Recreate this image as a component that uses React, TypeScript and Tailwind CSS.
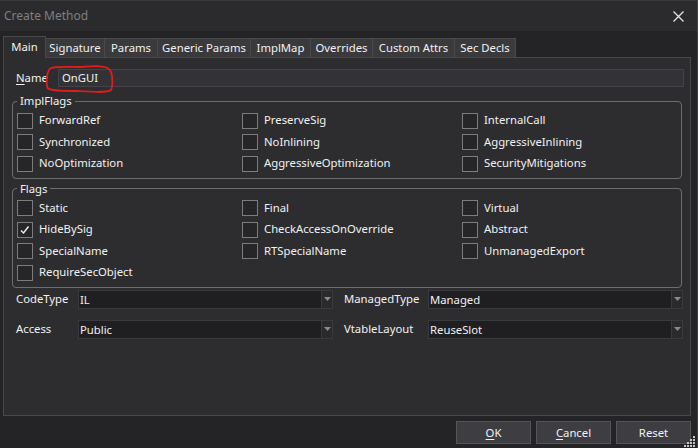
import React from "react";

const implFlags: [string, boolean][] = [
  ["ForwardRef", false],
  ["PreserveSig", false],
  ["InternalCall", false],
  ["Synchronized", false],
  ["NoInlining", false],
  ["AggressiveInlining", false],
  ["NoOptimization", false],
  ["AggressiveOptimization", false],
  ["SecurityMitigations", false],
];

const flags: [string, boolean][] = [
  ["Static", false],
  ["Final", false],
  ["Virtual", false],
  ["HideBySig", true],
  ["CheckAccessOnOverride", false],
  ["Abstract", false],
  ["SpecialName", false],
  ["RTSpecialName", false],
  ["UnmanagedExport", false],
  ["RequireSecObject", false],
];

const tabs = [
  { label: "Signature", w: "w-[59px]" },
  { label: "Params", w: "w-[53px]" },
  { label: "Generic Params", w: "w-[93px]" },
  { label: "ImplMap", w: "w-[60px]" },
  { label: "Overrides", w: "w-[62px]" },
  { label: "Custom Attrs", w: "w-[82px]" },
  { label: "Sec Decls", w: "w-[61px]" },
];

function CheckBox({ label, checked }: { label: string; checked: boolean }) {
  return (
    <div className="flex items-center h-[21.5px]">
      <span className="w-[16px] h-[16px] shrink-0 border border-[#7c7c7c] bg-[#262628] flex items-center justify-center">
        {checked && (
          <svg width="14" height="14" viewBox="0 0 14 14">
            <path d="M3 7.5 L5.5 10 L10.5 3.5" fill="none" stroke="#f0f0f0" strokeWidth="1.4" />
          </svg>
        )}
      </span>
      <span className="ml-[6px] whitespace-nowrap">{label}</span>
    </div>
  );
}

function Group({ title, items, className }: { title: string; items: [string, boolean][]; className: string }) {
  return (
    <fieldset className={`ml-[8px] mr-[8px] border border-[#6e6e6e] rounded-[4px] ${className}`}>
      <legend className="ml-[4px] px-[3px] leading-[14px]">{title}</legend>
      <div className="grid grid-cols-[225px_220px_1fr] pl-[4px]">
        {items.map(([label, checked]) => (
          <CheckBox key={label} label={label} checked={checked} />
        ))}
      </div>
    </fieldset>
  );
}

function Select({ value }: { value: string }) {
  return (
    <div className="w-[255px] h-[19px] flex border border-[#3a3a3e] bg-[#1f1f21]">
      <span className="flex-1 pl-[1px] leading-[17px]">{value}</span>
      <span className="w-[11px] border-l border-[#3a3a3e] bg-[#2a2a2d] flex items-center justify-center">
        <svg width="7" height="4" viewBox="0 0 7 4">
          <path d="M0 0 H7 L3.5 4 Z" fill="#8a8a8a" />
        </svg>
      </span>
    </div>
  );
}

function Button({ children }: { children: React.ReactNode }) {
  return (
    <button className="w-[75px] h-[23px] bg-[#3e3e42] border border-[#555558] text-[#f1f1f1] leading-[20px]">
      {children}
    </button>
  );
}

export default function App() {
  return (
    <div className="relative w-[698px] h-[448px] bg-[#242426] text-[#f1f1f1] text-[11.3px] font-['Noto_Sans','Open_Sans',sans-serif] overflow-hidden border-r border-[#434345]">
      {/* Title bar */}
      <div className="h-[31px] bg-[#2b2b2d] border-t border-[#3a3a3c] flex items-center justify-between pl-[4px] pr-[13px]">
        <span className="text-[#7f7f7f] text-[12px]">Create Method</span>
        <svg width="11" height="11" viewBox="0 0 11 11">
          <path d="M0.5 0.5 L10.5 10.5 M10.5 0.5 L0.5 10.5" stroke="#e6e6e6" strokeWidth="1.3" />
        </svg>
      </div>

      {/* Tabs */}
      <div className="relative z-10 flex items-end h-[22px] mt-[5px] ml-[3px] -mb-[1px]">
        <div className="w-[43px] h-[22px] bg-[#2d2d30] border-l border-t border-r border-[#48484b] flex items-center justify-center pb-[1px]">
          Main
        </div>
        {tabs.map((t) => (
          <div
            key={t.label}
            className={`${t.w} h-[19px] mb-[1px] bg-[#3a3a3d] border-t border-r border-[#4a4a4d] flex items-center justify-center whitespace-nowrap`}
          >
            {t.label}
          </div>
        ))}
      </div>

      {/* Tab page */}
      <div className="ml-[3px] w-[688px] h-[359px] bg-[#2d2d30] border border-[#48484b]">
        <div className="flex items-center mt-[11px] pl-[12px] pr-[6px]">
          <span className="w-[42px]">
            <span className="underline underline-offset-2">N</span>ame
          </span>
          <div className="flex-1 h-[18px] bg-[#333337] border border-[#444448] pl-[3px] leading-[16px]">OnGUI</div>
        </div>

        <Group title="ImplFlags" items={implFlags} className="mt-[7px] pt-[2px] pb-[3px]" />
        <Group title="Flags" items={flags} className="mt-[3px] pt-[2px] pb-[3px]" />

        <div className="grid grid-cols-[62px_255px_95px_255px] gap-y-[11px] mt-[2px] pl-[12px] items-center">
          <span>CodeType</span>
          <Select value="IL" />
          <span className="ml-[11px]">ManagedType</span>
          <Select value="Managed" />
          <span>Access</span>
          <Select value="Public" />
          <span className="ml-[11px]">VtableLayout</span>
          <Select value="ReuseSlot" />
        </div>
      </div>

      {/* Buttons */}
      <div className="flex justify-end gap-[5px] mt-[5px] w-[691px]">
        <Button>
          <span className="underline underline-offset-2">O</span>K
        </Button>
        <Button>
          <span className="underline underline-offset-2">C</span>ancel
        </Button>
        <Button>Reset</Button>
      </div>

      {/* Resize grip */}
      <svg className="absolute right-[1px] bottom-0" width="12" height="12" viewBox="0 0 12 12">
        {[
          [9, 0],
          [6, 3],
          [9, 3],
          [3, 6],
          [6, 6],
          [9, 6],
          [0, 9],
          [3, 9],
          [6, 9],
          [9, 9],
        ].map(([x, y]) => (
          <rect key={`${x}-${y}`} x={x} y={y} width="2" height="2" fill="#c8c8c8" />
        ))}
      </svg>

      {/* Hand-drawn red annotation around the name */}
      <svg className="absolute left-0 top-0 pointer-events-none" width="698" height="448">
        <path
          d="M49 70 C50 66 62 67 80 67 C95 66 106 65 110 70 C113 75 113 86 111 90 C107 93 94 92 76 91 C62 91 51 91 47.5 88 C46 83 46.5 74 49 70"
          fill="none"
          stroke="#e01c1c"
          strokeWidth="1.8"
        />
      </svg>
    </div>
  );
}
